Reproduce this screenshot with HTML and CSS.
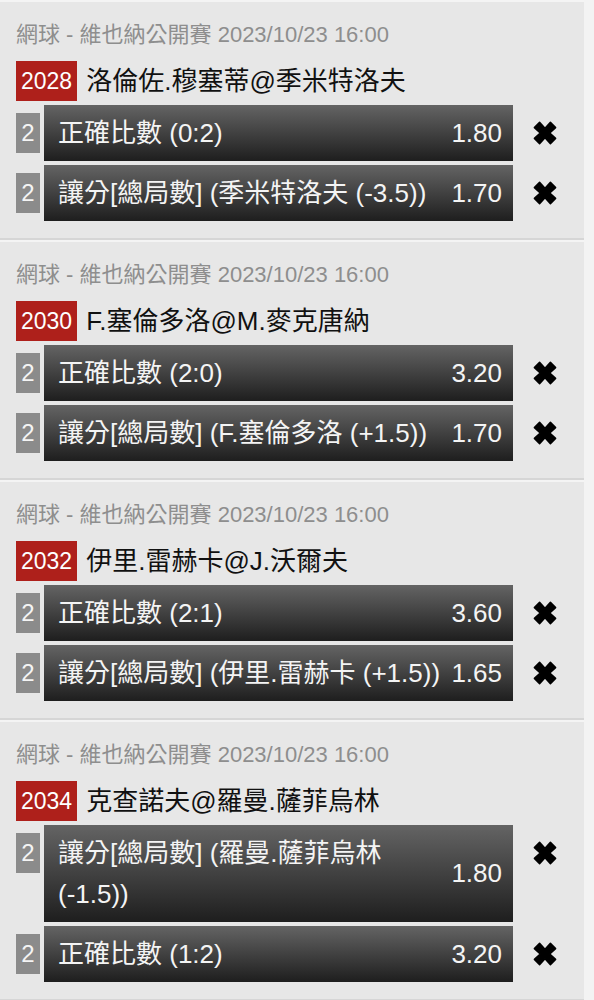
FILE: index.html
```html
<!DOCTYPE html>
<html lang="zh-Hant">
<head>
    <meta charset="UTF-8">
    <meta name="viewport" content="width=device-width, initial-scale=1.0">
    <title>投注單</title>
    <link rel="stylesheet" href="styles.css">
</head>
<body>
    <div class="slip">
        <section class="bet">
            <div class="bet-meta">網球 - 維也納公開賽 2023/10/23 16:00</div>
            <div class="bet-match">
                <span class="match-no">2028</span>
                <span class="match-name">洛倫佐.穆塞蒂@季米特洛夫</span>
            </div>
            <div class="leg">
                <span class="leg-qty">2</span>
                <div class="leg-bar"><span class="leg-label">正確比數 (0:2)</span><span class="leg-odds">1.80</span></div>
                <span class="leg-remove"><svg viewBox="0 0 24 24"><path d="M7 2.2 L12 7.6 L17 2.2 L21.8 7 L16.4 12 L21.8 17 L17 21.8 L12 16.4 L7 21.8 L2.2 17 L7.6 12 L2.2 7 Z"/></svg></span>
            </div>
            <div class="leg">
                <span class="leg-qty">2</span>
                <div class="leg-bar"><span class="leg-label">讓分[總局數] (季米特洛夫 (-3.5))</span><span class="leg-odds">1.70</span></div>
                <span class="leg-remove"><svg viewBox="0 0 24 24"><path d="M7 2.2 L12 7.6 L17 2.2 L21.8 7 L16.4 12 L21.8 17 L17 21.8 L12 16.4 L7 21.8 L2.2 17 L7.6 12 L2.2 7 Z"/></svg></span>
            </div>
        </section>

        <section class="bet">
            <div class="bet-meta">網球 - 維也納公開賽 2023/10/23 16:00</div>
            <div class="bet-match">
                <span class="match-no">2030</span>
                <span class="match-name">F.塞倫多洛@M.麥克唐納</span>
            </div>
            <div class="leg">
                <span class="leg-qty">2</span>
                <div class="leg-bar"><span class="leg-label">正確比數 (2:0)</span><span class="leg-odds">3.20</span></div>
                <span class="leg-remove"><svg viewBox="0 0 24 24"><path d="M7 2.2 L12 7.6 L17 2.2 L21.8 7 L16.4 12 L21.8 17 L17 21.8 L12 16.4 L7 21.8 L2.2 17 L7.6 12 L2.2 7 Z"/></svg></span>
            </div>
            <div class="leg">
                <span class="leg-qty">2</span>
                <div class="leg-bar"><span class="leg-label">讓分[總局數] (F.塞倫多洛 (+1.5))</span><span class="leg-odds">1.70</span></div>
                <span class="leg-remove"><svg viewBox="0 0 24 24"><path d="M7 2.2 L12 7.6 L17 2.2 L21.8 7 L16.4 12 L21.8 17 L17 21.8 L12 16.4 L7 21.8 L2.2 17 L7.6 12 L2.2 7 Z"/></svg></span>
            </div>
        </section>

        <section class="bet">
            <div class="bet-meta">網球 - 維也納公開賽 2023/10/23 16:00</div>
            <div class="bet-match">
                <span class="match-no">2032</span>
                <span class="match-name">伊里.雷赫卡@J.沃爾夫</span>
            </div>
            <div class="leg">
                <span class="leg-qty">2</span>
                <div class="leg-bar"><span class="leg-label">正確比數 (2:1)</span><span class="leg-odds">3.60</span></div>
                <span class="leg-remove"><svg viewBox="0 0 24 24"><path d="M7 2.2 L12 7.6 L17 2.2 L21.8 7 L16.4 12 L21.8 17 L17 21.8 L12 16.4 L7 21.8 L2.2 17 L7.6 12 L2.2 7 Z"/></svg></span>
            </div>
            <div class="leg">
                <span class="leg-qty">2</span>
                <div class="leg-bar"><span class="leg-label">讓分[總局數] (伊里.雷赫卡 (+1.5))</span><span class="leg-odds">1.65</span></div>
                <span class="leg-remove"><svg viewBox="0 0 24 24"><path d="M7 2.2 L12 7.6 L17 2.2 L21.8 7 L16.4 12 L21.8 17 L17 21.8 L12 16.4 L7 21.8 L2.2 17 L7.6 12 L2.2 7 Z"/></svg></span>
            </div>
        </section>

        <section class="bet">
            <div class="bet-meta">網球 - 維也納公開賽 2023/10/23 16:00</div>
            <div class="bet-match">
                <span class="match-no">2034</span>
                <span class="match-name">克查諾夫@羅曼.薩菲烏林</span>
            </div>
            <div class="leg">
                <span class="leg-qty">2</span>
                <div class="leg-bar"><span class="leg-label">讓分[總局數] (羅曼.薩菲烏林 (-1.5))</span><span class="leg-odds">1.80</span></div>
                <span class="leg-remove"><svg viewBox="0 0 24 24"><path d="M7 2.2 L12 7.6 L17 2.2 L21.8 7 L16.4 12 L21.8 17 L17 21.8 L12 16.4 L7 21.8 L2.2 17 L7.6 12 L2.2 7 Z"/></svg></span>
            </div>
            <div class="leg">
                <span class="leg-qty">2</span>
                <div class="leg-bar"><span class="leg-label">正確比數 (1:2)</span><span class="leg-odds">3.20</span></div>
                <span class="leg-remove"><svg viewBox="0 0 24 24"><path d="M7 2.2 L12 7.6 L17 2.2 L21.8 7 L16.4 12 L21.8 17 L17 21.8 L12 16.4 L7 21.8 L2.2 17 L7.6 12 L2.2 7 Z"/></svg></span>
            </div>
        </section>
    </div>
</body>
</html>
```

FILE: styles.css
```css
* {
    margin: 0;
    padding: 0;
    box-sizing: border-box;
}

body {
    font-family: 'Liberation Sans', 'Noto Sans CJK TC', sans-serif;
    background: #f3f3f3;
    color: #111;
}

.slip {
    width: 584px;
    background: #e7e7e7;
}

.bet {
    padding: 20px 0 17px 16px;
    border-top: 2px solid #f4f4f4;
    border-bottom: 2px solid #d6d6d6;
}

.bet-meta {
    font-size: 22px;
    line-height: 26px;
    color: #8e8e8e;
    margin-bottom: 13px;
}

.bet-match {
    display: flex;
    align-items: center;
    gap: 9px;
    height: 40px;
    margin-bottom: 4px;
}

.match-no {
    background: #ae201b;
    color: #fff;
    font-size: 23px;
    line-height: 40px;
    padding: 0 5px;
}

.match-name {
    font-size: 26px;
    line-height: 40px;
    color: #111;
}

.leg {
    display: flex;
    align-items: flex-start;
    margin-bottom: 4px;
}

.leg:last-child {
    margin-bottom: 0;
}

.leg-qty {
    width: 24px;
    height: 40px;
    margin-top: 8px;
    margin-right: 4px;
    background: #8b8b8b;
    color: #f4f4f4;
    font-size: 24px;
    line-height: 40px;
    text-align: center;
}

.leg-bar {
    width: 469px;
    display: flex;
    align-items: center;
    padding: 7.5px 11px 7.5px 14px;
    background: linear-gradient(#646464, #1e1e1e);
    color: #f4f4f4;
    font-size: 26px;
    line-height: 41px;
}

.leg-label {
    flex: 1;
}

.leg-odds {
    margin-left: 8px;
}

.leg-remove {
    width: 64px;
    display: flex;
    justify-content: center;
    margin-top: 15px;
}

.leg-remove svg {
    width: 26px;
    height: 26px;
    fill: #000;
    stroke: #000;
    stroke-width: 1.4;
    stroke-linejoin: round;
}
```
